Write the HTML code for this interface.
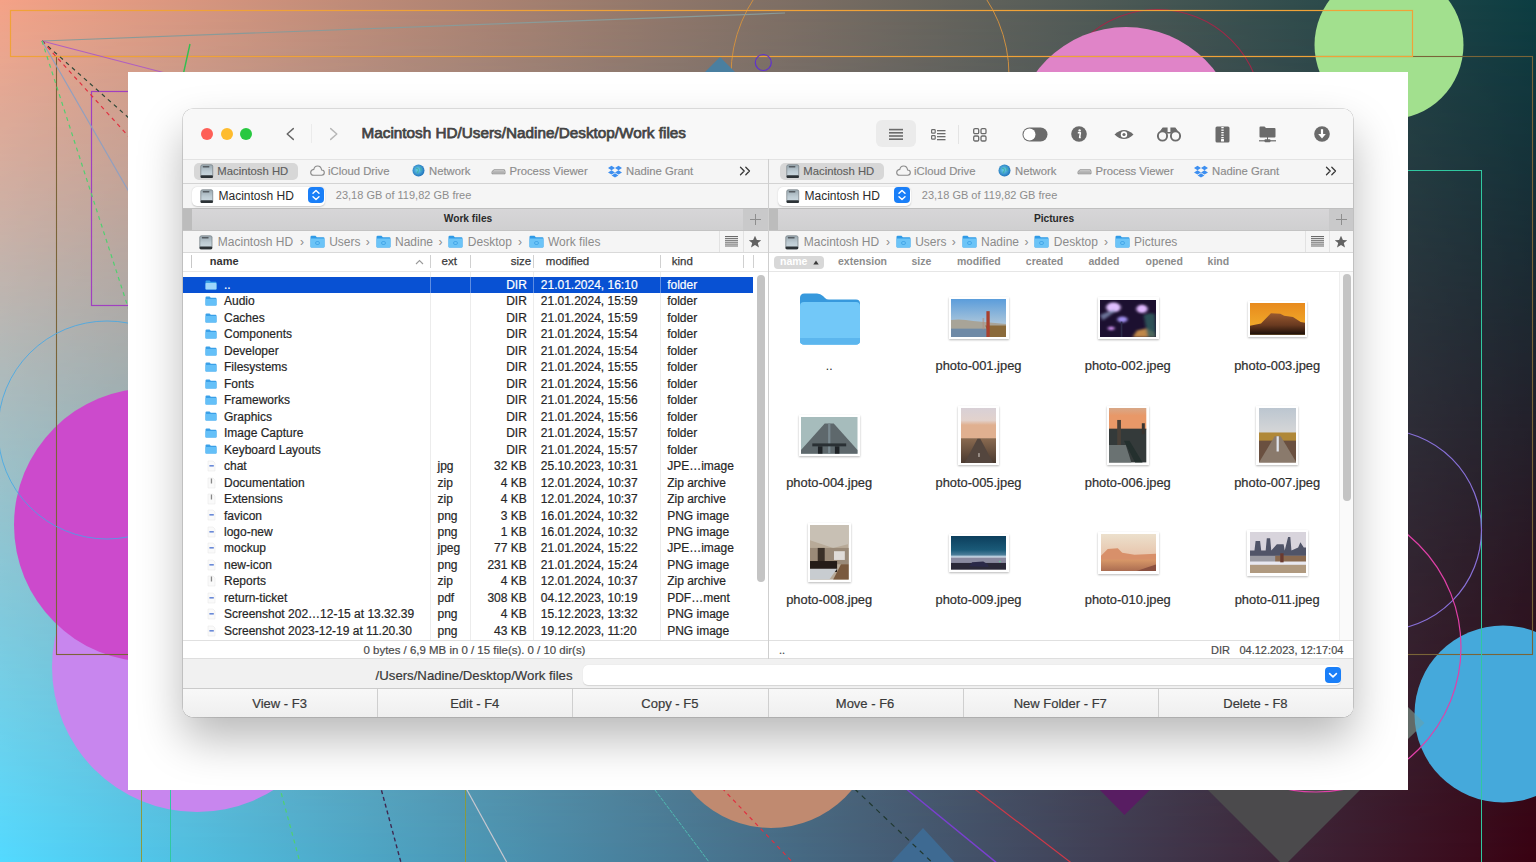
<!DOCTYPE html>
<html><head><meta charset="utf-8"><style>
*{margin:0;padding:0;box-sizing:border-box}
html,body{width:1536px;height:862px;overflow:hidden;position:relative;font-family:"Liberation Sans",sans-serif}
#bgb{position:absolute;left:0;top:0;width:1536px;height:862px;background:linear-gradient(to right,#53daff,#3a0212)}
#bgt{position:absolute;left:0;top:0;width:1536px;height:862px;background:linear-gradient(to right,#f5a287,#0c3d42);-webkit-mask-image:linear-gradient(to bottom,#000,transparent);mask-image:linear-gradient(to bottom,#000,transparent)}
#frame{position:absolute;left:128px;top:72px;width:1280px;height:718px;background:#fff}
.a{position:absolute;white-space:pre}
</style></head><body>
<div id="bgb"></div><div id="bgt"></div>
<svg width="1536" height="862" viewBox="0 0 1536 862" style="position:absolute;left:0;top:0">
<circle cx="1157.5" cy="114" r="104.5" fill="none" stroke="#a02848" stroke-width="1.1"/>
<circle cx="870" cy="75" r="139" fill="none" stroke="#d09040" stroke-width="1"/>
<circle cx="1126" cy="139" r="112" fill="#e084c8"/>
<circle cx="1389" cy="45" r="74.5" fill="#a2e08e"/>
<polygon points="720,57 703,74 737,74" fill="#4a7fa0"/>
<circle cx="197" cy="667" r="145" fill="#c886ee"/>
<circle cx="151" cy="525" r="137" fill="#cc4acc"/>
<circle cx="771" cy="723" r="105" fill="#c08a70"/>
<polygon points="923,828 888,866 958,866" fill="#3e6a92"/>
<polygon points="1095,785 1155,785 1124.5,815" fill="#581d62"/>
<polygon points="1200,782 1368,782 1284,866" fill="#4b4a4c"/>
<polygon points="1380,680 1424.5,723 1380,766" fill="#555052"/>
<circle cx="1503" cy="714" r="88.5" fill="#45a9db"/>
<polygon points="1380,680 1424.5,723 1380,766" fill="#7a9a90" opacity="0.35"/>
<rect x="56.5" y="56.5" width="1476" height="598" fill="none" stroke="#7a6438" stroke-width="1.1"/>
<rect x="10.5" y="10.5" width="1402" height="46" fill="none" stroke="#f0a238" stroke-width="1.2"/>
<rect x="91.5" y="91.5" width="300" height="214" fill="none" stroke="#a040c0" stroke-width="1.2"/>
<rect x="170.5" y="170.5" width="1311" height="800" fill="none" stroke="#30c8a0" stroke-width="1"/>
<line x1="141.5" y1="700" x2="141.5" y2="862" stroke="#8a9a40" stroke-width="1"/>
<line x1="465.5" y1="700" x2="465.5" y2="862" stroke="#8a9a40" stroke-width="1"/>
<line x1="42" y1="41" x2="785" y2="13" stroke="#8a9a98" stroke-width="1.2"/>
<line x1="42" y1="41" x2="200" y2="82" stroke="#b060c0" stroke-width="1.2"/>
<line x1="42" y1="41" x2="200" y2="181" stroke="#304838" stroke-width="1.2" stroke-dasharray="4,4"/>
<line x1="42" y1="41" x2="200" y2="215" stroke="#e03040" stroke-width="1.2" stroke-dasharray="4,4"/>
<line x1="42" y1="41" x2="200" y2="315" stroke="#90a0c0" stroke-width="1.2"/>
<line x1="42" y1="41" x2="200" y2="530" stroke="#50d070" stroke-width="1.2" stroke-dasharray="4,4"/>
<line x1="190" y1="44" x2="182" y2="80" stroke="#30c050" stroke-width="1.4"/>
<circle cx="763.3" cy="62.5" r="8" fill="none" stroke="#6030d0" stroke-width="1.2"/>
<circle cx="107" cy="430" r="109" fill="none" stroke="#40a8e8" stroke-width="1" opacity="0.8"/>
<line x1="700" y1="765" x2="800" y2="870" stroke="#e03040" stroke-width="1.2" stroke-dasharray="4,4"/>
<line x1="275" y1="770" x2="302" y2="870" stroke="#50d070" stroke-width="1.2" stroke-dasharray="4,4"/>
<line x1="376" y1="770" x2="403" y2="870" stroke="#402850" stroke-width="1.4" stroke-dasharray="4,3"/>
<line x1="456" y1="770" x2="511" y2="870" stroke="#c8c8d0" stroke-width="1.2"/>
<line x1="640" y1="770" x2="715" y2="870" stroke="#50b8b0" stroke-width="1" stroke-dasharray="4,1"/>
<line x1="840" y1="775" x2="937" y2="867" stroke="#203830" stroke-width="1.2" stroke-dasharray="5,5"/>
<line x1="888" y1="774" x2="1003" y2="868" stroke="#7a40d0" stroke-width="1.5"/>
<line x1="955" y1="774" x2="1078" y2="868" stroke="#d03848" stroke-width="1.2"/>
<circle cx="1381" cy="530" r="100.5" fill="none" stroke="#8870d8" stroke-width="1.2"/>
<circle cx="1316" cy="647" r="145" fill="none" stroke="#e040a8" stroke-width="1.2"/>
</svg>
<div id="frame"></div>
<div style="position:absolute;left:182.6px;top:108.6px;width:1170.8px;height:608.2px;border-radius:10px;box-shadow:0 22px 45px rgba(0,0,0,0.28),0 0 0 0.6px rgba(0,0,0,0.22);"></div>
<div style="position:absolute;left:182.6px;top:108.6px;width:1170.8px;height:608.2px;border-radius:10px;overflow:hidden;background:#fff;"><div style="position:absolute;left:-0.6px;top:-0.6px;width:1172px;height:609px">
<div class="a" style="left:0.00px;top:0.00px;width:1172.00px;height:51.00px;background:#f8f8f8"></div>
<div class="a" style="left:0.00px;top:51.00px;width:1172.00px;height:1.00px;background:#e3e3e3"></div>
<div class="a" style="left:19.20px;top:19.60px;width:12.00px;height:12.00px;background:#fe5f57;border-radius:50%"></div>
<div class="a" style="left:39.00px;top:19.60px;width:12.00px;height:12.00px;background:#febc2e;border-radius:50%"></div>
<div class="a" style="left:58.30px;top:19.60px;width:12.00px;height:12.00px;background:#28c840;border-radius:50%"></div>
<svg class="a" style="left:102.00px;top:17.00px" width="12" height="17" viewBox="0 0 12 17"><path d="M9.3 3.6 L3.2 9 L9.3 14.4" fill="none" stroke="#686868" stroke-width="1.45" stroke-linecap="round" stroke-linejoin="round"/></svg>
<div class="a" style="left:129.00px;top:16.00px;width:1.00px;height:19.00px;background:#ebebeb"></div>
<svg class="a" style="left:145.00px;top:17.00px" width="12" height="17" viewBox="0 0 12 17"><path d="M3.7 3.6 L9.8 9 L3.7 14.4" fill="none" stroke="#b8b8b8" stroke-width="1.45" stroke-linecap="round" stroke-linejoin="round"/></svg>
<div class="a" style="left:179.50px;top:17.35px;font-size:15.3px;line-height:15.3px;color:#444;font-weight:normal;-webkit-text-stroke:0.75px #444">Macintosh HD/Users/Nadine/Desktop/Work files</div>
<div class="a" style="left:694.00px;top:12.00px;width:40.00px;height:26.60px;background:#ebebeb;border-radius:6px"></div>
<svg class="a" style="left:707.00px;top:20.00px" width="14" height="12" viewBox="0 0 14 12"><rect x="0" y="0.8" width="14" height="1.6" fill="#6b6b6b"/><rect x="0" y="4.0" width="14" height="1.6" fill="#6b6b6b"/><rect x="0" y="7.2" width="14" height="1.6" fill="#6b6b6b"/><rect x="0" y="10.4" width="14" height="1.6" fill="#6b6b6b"/></svg>
<svg class="a" style="left:748.50px;top:20.50px" width="15" height="12" viewBox="0 0 15 12"><rect x="0.6" y="0.6" width="3.6" height="3.6" rx="0.8" fill="none" stroke="#6b6b6b" stroke-width="1.2"/><rect x="0.6" y="6.6" width="3.6" height="3.6" rx="0.8" fill="none" stroke="#6b6b6b" stroke-width="1.2"/><rect x="6" y="1" width="8.5" height="1.3" fill="#6b6b6b"/><rect x="6" y="4" width="8.5" height="1.3" fill="#6b6b6b"/><rect x="6" y="7" width="8.5" height="1.3" fill="#6b6b6b"/><rect x="6" y="10" width="8.5" height="1.3" fill="#6b6b6b"/></svg>
<div class="a" style="left:776.00px;top:16.50px;width:1.00px;height:19.00px;background:#e4e4e4"></div>
<svg class="a" style="left:790.50px;top:19.50px" width="14" height="14" viewBox="0 0 14 14"><rect x="0.7" y="0.7" width="5" height="5" rx="1.3" fill="none" stroke="#6b6b6b" stroke-width="1.3"/><rect x="0.7" y="8.0" width="5" height="5" rx="1.3" fill="none" stroke="#6b6b6b" stroke-width="1.3"/><rect x="8.0" y="0.7" width="5" height="5" rx="1.3" fill="none" stroke="#6b6b6b" stroke-width="1.3"/><rect x="8.0" y="8.0" width="5" height="5" rx="1.3" fill="none" stroke="#6b6b6b" stroke-width="1.3"/></svg>
<svg class="a" style="left:839.50px;top:18.50px" width="26" height="15" viewBox="0 0 26 15"><rect x="0.5" y="0.5" width="25" height="14" rx="7" fill="#6b6b6b"/><circle cx="7.5" cy="7.5" r="6" fill="#fff"/></svg>
<svg class="a" style="left:889.00px;top:18.00px" width="16" height="16" viewBox="0 0 16 16"><circle cx="8" cy="8" r="7.8" fill="#6b6b6b"/><circle cx="8.6" cy="4.4" r="1.2" fill="#fff"/><path d="M6.8 6.8 H9.4 L8.6 11.6 H9.8" fill="none" stroke="#fff" stroke-width="1.5" stroke-linejoin="round"/></svg>
<svg class="a" style="left:932.00px;top:19.50px" width="20" height="13" viewBox="0 0 20 13"><path d="M0.5 6.5 Q10 -2.5 19.5 6.5 Q10 15.5 0.5 6.5 Z" fill="#6b6b6b"/><circle cx="10" cy="6.5" r="3.2" fill="#fff"/><circle cx="10" cy="6.5" r="1.6" fill="#6b6b6b"/></svg>
<svg class="a" style="left:974.50px;top:18.50px" width="24" height="15" viewBox="0 0 24 15"><circle cx="5.5" cy="9" r="4.6" fill="none" stroke="#6b6b6b" stroke-width="1.9"/><circle cx="18.5" cy="9" r="4.6" fill="none" stroke="#6b6b6b" stroke-width="1.9"/><path d="M3 5 L6 1 H10 V6 H14 V1 H18 L21 5" fill="#6b6b6b" stroke="#6b6b6b" stroke-width="1.2"/></svg>
<svg class="a" style="left:1032.50px;top:17.50px" width="15" height="17" viewBox="0 0 15 17"><rect x="0.5" y="0.5" width="14" height="16" rx="1.5" fill="#6b6b6b"/><rect x="6.3" y="1.0" width="2.4" height="1.3" fill="#fff"/><rect x="6.3" y="3.5" width="2.4" height="1.3" fill="#fff"/><rect x="6.3" y="6.0" width="2.4" height="1.3" fill="#fff"/><rect x="6.3" y="8.5" width="2.4" height="1.3" fill="#fff"/><rect x="6.3" y="11.0" width="2.4" height="1.3" fill="#fff"/><rect x="6" y="13" width="3" height="2.5" rx="0.5" fill="#fff"/></svg>
<svg class="a" style="left:1076.50px;top:17.50px" width="17" height="17" viewBox="0 0 17 17"><path d="M0.5 1.5 Q0.5 0.5 1.5 0.5 H5.5 L7 2 H15.5 Q16.5 2 16.5 3 V10.5 Q16.5 11.5 15.5 11.5 H1.5 Q0.5 11.5 0.5 10.5 Z" fill="#6b6b6b"/><rect x="8" y="11" width="1" height="3" fill="#6b6b6b"/><rect x="0" y="14.2" width="17" height="1.2" fill="#6b6b6b"/><rect x="5.5" y="13.2" width="6" height="3" rx="1" fill="#6b6b6b"/></svg>
<svg class="a" style="left:1131.50px;top:18.00px" width="16" height="16" viewBox="0 0 16 16"><circle cx="8" cy="8" r="7.8" fill="#6b6b6b"/><rect x="6.9" y="3.2" width="2.2" height="5.5" fill="#fff"/><path d="M4.2 8 H11.8 L8 12.4 Z" fill="#fff"/></svg>
<div class="a" style="left:0.00px;top:52.00px;width:586.00px;height:23.00px;background:#f5f5f5"></div>
<div class="a" style="left:0.00px;top:75.00px;width:586.00px;height:1.00px;background:#d3d3d3"></div>
<div class="a" style="left:11.50px;top:54.50px;width:104.00px;height:17.00px;background:#d7d7d7;border-radius:5px"></div>
<svg class="a" style="left:18.00px;top:56.00px" width="13.5" height="14.464285714285714" viewBox="0 0 14 15"><defs><linearGradient id="hdg1" x1="0" y1="0" x2="0" y2="1"><stop offset="0" stop-color="#9aa8b0"/><stop offset="0.5" stop-color="#bccad2"/><stop offset="1" stop-color="#d0dde4"/></linearGradient></defs><rect x="0.8" y="0.8" width="12.4" height="13.4" rx="1.6" fill="url(#hdg1)" stroke="#7a848a" stroke-width="0.8"/><rect x="2.8" y="2" width="7" height="1.6" rx="0.5" fill="#555c62"/><rect x="0.6" y="11.6" width="12.8" height="2.8" rx="1" fill="#2c3236"/></svg>
<div class="a" style="left:35.30px;top:57.53px;font-size:11.3px;line-height:11.3px;color:#5e5e5e;font-weight:normal;-webkit-text-stroke:0.15px #5e5e5e">Macintosh HD</div>
<svg class="a" style="left:127.50px;top:57.00px" width="15" height="11" viewBox="0 0 15 11"><path d="M3.6 10.3 H11.6 Q14.3 10.3 14.3 7.6 Q14.3 5 11.6 5 Q11 1 7.6 1 Q4.4 1 3.8 4.4 Q0.7 4.8 0.7 7.5 Q0.7 10.3 3.6 10.3 Z" fill="none" stroke="#8a8a8a" stroke-width="1.1"/></svg>
<div class="a" style="left:146.00px;top:57.53px;font-size:11.3px;line-height:11.3px;color:#8c8c8c;font-weight:normal;-webkit-text-stroke:0.15px #8c8c8c">iCloud Drive</div>
<svg class="a" style="left:229.50px;top:56.00px" width="13" height="13" viewBox="0 0 13 13"><defs><radialGradient id="glb" cx="0.45" cy="0.45" r="0.6"><stop offset="0" stop-color="#6fd4f0"/><stop offset="1" stop-color="#1a6cb8"/></radialGradient></defs><circle cx="6.5" cy="6.5" r="6" fill="url(#glb)"/><path d="M4 4.5 Q6 4 6.5 6 Q6 8 5 9 M8 3 Q9.5 5 9 7" fill="none" stroke="#40b0a0" stroke-width="1.2" opacity="0.8"/></svg>
<div class="a" style="left:247.00px;top:57.53px;font-size:11.3px;line-height:11.3px;color:#8c8c8c;font-weight:normal;-webkit-text-stroke:0.15px #8c8c8c">Network</div>
<svg class="a" style="left:309.00px;top:59.50px" width="15" height="7" viewBox="0 0 15 7"><path d="M1 3.5 L3 1.8 H13.5 L14 3.5 V5.8 H1 Z" fill="#d8d8d8" stroke="#8a8a8a" stroke-width="0.9"/><rect x="2" y="3.6" width="11" height="0.9" fill="#8a8a8a"/></svg>
<div class="a" style="left:327.40px;top:57.53px;font-size:11.3px;line-height:11.3px;color:#8c8c8c;font-weight:normal;-webkit-text-stroke:0.15px #8c8c8c">Process Viewer</div>
<svg class="a" style="left:426.00px;top:56.50px" width="14" height="13" viewBox="0 0 14 13"><path d="M3.5 0.8 L7 3 L3.5 5.2 L0 3 Z M10.5 0.8 L14 3 L10.5 5.2 L7 3 Z M3.5 5.2 L7 7.4 L3.5 9.6 L0 7.4 Z M10.5 5.2 L14 7.4 L10.5 9.6 L7 7.4 Z M3.6 10.4 L7 8.3 L10.4 10.4 L7 12.6 Z" fill="#3d8ff0"/></svg>
<div class="a" style="left:444.00px;top:57.53px;font-size:11.3px;line-height:11.3px;color:#8c8c8c;font-weight:normal;-webkit-text-stroke:0.15px #8c8c8c">Nadine Grant</div>
<svg class="a" style="left:557.00px;top:58.00px" width="12" height="10" viewBox="0 0 12 10"><path d="M1.5 1.2 L5.2 5 L1.5 8.8 M6.8 1.2 L10.5 5 L6.8 8.8" fill="none" stroke="#3a3a3a" stroke-width="1.3" stroke-linecap="round" stroke-linejoin="round"/></svg>
<div class="a" style="left:0.00px;top:76.00px;width:586.00px;height:24.00px;background:#f5f5f5"></div>
<div class="a" style="left:0.00px;top:100.00px;width:586.00px;height:1.00px;background:#bfbfbf"></div>
<div class="a" style="left:10.30px;top:78.80px;width:133.00px;height:19.00px;background:#fff;border-radius:5px;box-shadow:0 0.5px 1.5px rgba(0,0,0,0.18)"></div>
<svg class="a" style="left:18.20px;top:80.80px" width="13.5" height="14.464285714285714" viewBox="0 0 14 15"><defs><linearGradient id="hdg2" x1="0" y1="0" x2="0" y2="1"><stop offset="0" stop-color="#9aa8b0"/><stop offset="0.5" stop-color="#bccad2"/><stop offset="1" stop-color="#d0dde4"/></linearGradient></defs><rect x="0.8" y="0.8" width="12.4" height="13.4" rx="1.6" fill="url(#hdg2)" stroke="#7a848a" stroke-width="0.8"/><rect x="2.8" y="2" width="7" height="1.6" rx="0.5" fill="#555c62"/><rect x="0.6" y="11.6" width="12.8" height="2.8" rx="1" fill="#2c3236"/></svg>
<div class="a" style="left:36.50px;top:81.64px;font-size:12px;line-height:12px;color:#2a2a2a;font-weight:normal;">Macintosh HD</div>
<svg class="a" style="left:126.40px;top:79.30px" width="16" height="16" viewBox="0 0 16 16"><rect x="0" y="0" width="16" height="16" rx="4" fill="#1a7ff8"/><path d="M5 6.2 L8 3.4 L11 6.2 M5 9.8 L8 12.6 L11 9.8" fill="none" stroke="#fff" stroke-width="1.4" stroke-linecap="round" stroke-linejoin="round"/></svg>
<div class="a" style="left:153.80px;top:82.29px;font-size:11px;line-height:11px;color:#8d8d8d;font-weight:normal;">23,18 GB of 119,82 GB free</div>
<div class="a" style="left:0.00px;top:101.00px;width:586.00px;height:21.50px;background:linear-gradient(#d7d6d8,#cfcfd0)"></div>
<div class="a" style="left:0.00px;top:101.00px;width:10.00px;height:21.50px;background:#bcbcbc"></div>
<div class="a" style="left:561.00px;top:101.00px;width:24.50px;height:21.50px;background:#c9c9ca"></div>
<div class="a" style="left:0.00px;top:122.00px;width:586.00px;height:1.00px;background:#c3c3c3"></div>
<svg class="a" style="left:566.50px;top:105.00px" width="13" height="13" viewBox="0 0 13 13"><path d="M6.5 1 V12 M1 6.5 H12" stroke="#8e8e8e" stroke-width="1"/></svg>
<div class="a" style="left:-14.00px;width:600px;text-align:center;top:106.47px;font-size:10.2px;line-height:10.2px;color:#2a2a2a;font-weight:bold;">Work files</div>
<div class="a" style="left:0.00px;top:123.00px;width:586.00px;height:21.50px;background:#f5f5f5"></div>
<div class="a" style="left:0.00px;top:144.00px;width:586.00px;height:1.00px;background:#d9d9d9"></div>
<div class="a" style="left:537.00px;top:123.00px;width:1.00px;height:21.00px;background:#e2e2e2"></div>
<div class="a" style="left:561.00px;top:123.00px;width:1.00px;height:21.00px;background:#e2e2e2"></div>
<svg class="a" style="left:543.00px;top:128.00px" width="13" height="11" viewBox="0 0 13 11"><rect x="0" y="0.0" width="13" height="1.1" fill="#6a6a6a"/><rect x="0" y="2.1" width="13" height="1.1" fill="#6a6a6a"/><rect x="0" y="4.2" width="13" height="1.1" fill="#6a6a6a"/><rect x="0" y="6.3" width="13" height="1.1" fill="#6a6a6a"/><rect x="0" y="8.4" width="13" height="1.1" fill="#6a6a6a"/><rect x="0" y="10.5" width="13" height="1.1" fill="#6a6a6a"/></svg>
<svg class="a" style="left:566.00px;top:126.50px" width="14" height="14" viewBox="0 0 14 14"><path d="M7 0.8 L8.9 5 L13.3 5.2 L9.8 8 L11 12.5 L7 10 L3 12.5 L4.2 8 L0.7 5.2 L5.1 5 Z" fill="#626262"/></svg>
<svg class="a" style="left:16.80px;top:126.80px" width="13.8" height="14.785714285714286" viewBox="0 0 14 15"><defs><linearGradient id="hdg3" x1="0" y1="0" x2="0" y2="1"><stop offset="0" stop-color="#9aa8b0"/><stop offset="0.5" stop-color="#bccad2"/><stop offset="1" stop-color="#d0dde4"/></linearGradient></defs><rect x="0.8" y="0.8" width="12.4" height="13.4" rx="1.6" fill="url(#hdg3)" stroke="#7a848a" stroke-width="0.8"/><rect x="2.8" y="2" width="7" height="1.6" rx="0.5" fill="#555c62"/><rect x="0.6" y="11.6" width="12.8" height="2.8" rx="1" fill="#2c3236"/></svg>
<div class="a" style="left:35.80px;top:128.44px;font-size:12px;line-height:12px;color:#8b8b8b;font-weight:normal;">Macintosh HD</div>
<div class="a" style="left:117.90px;top:128.04px;font-size:12px;line-height:12px;color:#8b8b8b;font-weight:normal;">›</div>
<div class="a" style="left:183.80px;top:128.04px;font-size:12px;line-height:12px;color:#8b8b8b;font-weight:normal;">›</div>
<div class="a" style="left:256.50px;top:128.04px;font-size:12px;line-height:12px;color:#8b8b8b;font-weight:normal;">›</div>
<div class="a" style="left:336.00px;top:128.04px;font-size:12px;line-height:12px;color:#8b8b8b;font-weight:normal;">›</div>
<svg class="a" style="left:128.00px;top:127.00px" width="15" height="13" viewBox="0 0 15 13"><path d="M0.5 2 Q0.5 0.8 1.7 0.8 H5.5 L6.8 2.2 H13.3 Q14.5 2.2 14.5 3.4 V11.6 Q14.5 12.5 13.6 12.5 H1.4 Q0.5 12.5 0.5 11.6 Z" fill="#2f9ae6"/><rect x="0.5" y="3.6" width="14" height="8.9" rx="1" fill="#6cc4f7"/><rect x="5.5" y="6.5" width="4" height="3" rx="1.5" fill="none" stroke="#3da2e6" stroke-width="0.8"/></svg>
<div class="a" style="left:147.20px;top:128.44px;font-size:12px;line-height:12px;color:#8b8b8b;font-weight:normal;">Users</div>
<svg class="a" style="left:194.00px;top:127.00px" width="15" height="13" viewBox="0 0 15 13"><path d="M0.5 2 Q0.5 0.8 1.7 0.8 H5.5 L6.8 2.2 H13.3 Q14.5 2.2 14.5 3.4 V11.6 Q14.5 12.5 13.6 12.5 H1.4 Q0.5 12.5 0.5 11.6 Z" fill="#2f9ae6"/><rect x="0.5" y="3.6" width="14" height="8.9" rx="1" fill="#6cc4f7"/><rect x="5.5" y="6.5" width="4" height="3" rx="1.5" fill="none" stroke="#3da2e6" stroke-width="0.8"/></svg>
<div class="a" style="left:213.00px;top:128.44px;font-size:12px;line-height:12px;color:#8b8b8b;font-weight:normal;">Nadine</div>
<svg class="a" style="left:266.40px;top:127.00px" width="15" height="13" viewBox="0 0 15 13"><path d="M0.5 2 Q0.5 0.8 1.7 0.8 H5.5 L6.8 2.2 H13.3 Q14.5 2.2 14.5 3.4 V11.6 Q14.5 12.5 13.6 12.5 H1.4 Q0.5 12.5 0.5 11.6 Z" fill="#2f9ae6"/><rect x="0.5" y="3.6" width="14" height="8.9" rx="1" fill="#6cc4f7"/><rect x="5.5" y="6.5" width="4" height="3" rx="1.5" fill="none" stroke="#3da2e6" stroke-width="0.8"/></svg>
<div class="a" style="left:285.80px;top:128.44px;font-size:12px;line-height:12px;color:#8b8b8b;font-weight:normal;">Desktop</div>
<svg class="a" style="left:347.00px;top:127.00px" width="15" height="13" viewBox="0 0 15 13"><path d="M0.5 2 Q0.5 0.8 1.7 0.8 H5.5 L6.8 2.2 H13.3 Q14.5 2.2 14.5 3.4 V11.6 Q14.5 12.5 13.6 12.5 H1.4 Q0.5 12.5 0.5 11.6 Z" fill="#2f9ae6"/><rect x="0.5" y="3.6" width="14" height="8.9" rx="1" fill="#6cc4f7"/><rect x="5.5" y="6.5" width="4" height="3" rx="1.5" fill="none" stroke="#3da2e6" stroke-width="0.8"/></svg>
<div class="a" style="left:366.00px;top:128.44px;font-size:12px;line-height:12px;color:#8b8b8b;font-weight:normal;">Work files</div>
<div class="a" style="left:0.00px;top:145.00px;width:586.00px;height:18.00px;background:#fff"></div>
<div class="a" style="left:0.00px;top:163.00px;width:586.00px;height:1.00px;background:#e6e6e6"></div>
<div class="a" style="left:0.00px;top:164.00px;width:586.00px;height:368.00px;background:#fff"></div>
<div class="a" style="left:0.00px;top:532.00px;width:586.00px;height:1.00px;background:#e0e0e0"></div>
<div class="a" style="left:0.00px;top:533.00px;width:586.00px;height:17.00px;background:#fff"></div>
<div class="a" style="left:0.00px;top:550.00px;width:586.00px;height:1.00px;background:#dedede"></div>
<div class="a" style="left:586.00px;top:52.00px;width:586.00px;height:23.00px;background:#f5f5f5"></div>
<div class="a" style="left:586.00px;top:75.00px;width:586.00px;height:1.00px;background:#d3d3d3"></div>
<div class="a" style="left:597.50px;top:54.50px;width:104.00px;height:17.00px;background:#d7d7d7;border-radius:5px"></div>
<svg class="a" style="left:604.00px;top:56.00px" width="13.5" height="14.464285714285714" viewBox="0 0 14 15"><defs><linearGradient id="hdg4" x1="0" y1="0" x2="0" y2="1"><stop offset="0" stop-color="#9aa8b0"/><stop offset="0.5" stop-color="#bccad2"/><stop offset="1" stop-color="#d0dde4"/></linearGradient></defs><rect x="0.8" y="0.8" width="12.4" height="13.4" rx="1.6" fill="url(#hdg4)" stroke="#7a848a" stroke-width="0.8"/><rect x="2.8" y="2" width="7" height="1.6" rx="0.5" fill="#555c62"/><rect x="0.6" y="11.6" width="12.8" height="2.8" rx="1" fill="#2c3236"/></svg>
<div class="a" style="left:621.30px;top:57.53px;font-size:11.3px;line-height:11.3px;color:#5e5e5e;font-weight:normal;-webkit-text-stroke:0.15px #5e5e5e">Macintosh HD</div>
<svg class="a" style="left:713.50px;top:57.00px" width="15" height="11" viewBox="0 0 15 11"><path d="M3.6 10.3 H11.6 Q14.3 10.3 14.3 7.6 Q14.3 5 11.6 5 Q11 1 7.6 1 Q4.4 1 3.8 4.4 Q0.7 4.8 0.7 7.5 Q0.7 10.3 3.6 10.3 Z" fill="none" stroke="#8a8a8a" stroke-width="1.1"/></svg>
<div class="a" style="left:732.00px;top:57.53px;font-size:11.3px;line-height:11.3px;color:#8c8c8c;font-weight:normal;-webkit-text-stroke:0.15px #8c8c8c">iCloud Drive</div>
<svg class="a" style="left:815.50px;top:56.00px" width="13" height="13" viewBox="0 0 13 13"><defs><radialGradient id="glb" cx="0.45" cy="0.45" r="0.6"><stop offset="0" stop-color="#6fd4f0"/><stop offset="1" stop-color="#1a6cb8"/></radialGradient></defs><circle cx="6.5" cy="6.5" r="6" fill="url(#glb)"/><path d="M4 4.5 Q6 4 6.5 6 Q6 8 5 9 M8 3 Q9.5 5 9 7" fill="none" stroke="#40b0a0" stroke-width="1.2" opacity="0.8"/></svg>
<div class="a" style="left:833.00px;top:57.53px;font-size:11.3px;line-height:11.3px;color:#8c8c8c;font-weight:normal;-webkit-text-stroke:0.15px #8c8c8c">Network</div>
<svg class="a" style="left:895.00px;top:59.50px" width="15" height="7" viewBox="0 0 15 7"><path d="M1 3.5 L3 1.8 H13.5 L14 3.5 V5.8 H1 Z" fill="#d8d8d8" stroke="#8a8a8a" stroke-width="0.9"/><rect x="2" y="3.6" width="11" height="0.9" fill="#8a8a8a"/></svg>
<div class="a" style="left:913.40px;top:57.53px;font-size:11.3px;line-height:11.3px;color:#8c8c8c;font-weight:normal;-webkit-text-stroke:0.15px #8c8c8c">Process Viewer</div>
<svg class="a" style="left:1012.00px;top:56.50px" width="14" height="13" viewBox="0 0 14 13"><path d="M3.5 0.8 L7 3 L3.5 5.2 L0 3 Z M10.5 0.8 L14 3 L10.5 5.2 L7 3 Z M3.5 5.2 L7 7.4 L3.5 9.6 L0 7.4 Z M10.5 5.2 L14 7.4 L10.5 9.6 L7 7.4 Z M3.6 10.4 L7 8.3 L10.4 10.4 L7 12.6 Z" fill="#3d8ff0"/></svg>
<div class="a" style="left:1030.00px;top:57.53px;font-size:11.3px;line-height:11.3px;color:#8c8c8c;font-weight:normal;-webkit-text-stroke:0.15px #8c8c8c">Nadine Grant</div>
<svg class="a" style="left:1143.00px;top:58.00px" width="12" height="10" viewBox="0 0 12 10"><path d="M1.5 1.2 L5.2 5 L1.5 8.8 M6.8 1.2 L10.5 5 L6.8 8.8" fill="none" stroke="#3a3a3a" stroke-width="1.3" stroke-linecap="round" stroke-linejoin="round"/></svg>
<div class="a" style="left:586.00px;top:76.00px;width:586.00px;height:24.00px;background:#f5f5f5"></div>
<div class="a" style="left:586.00px;top:100.00px;width:586.00px;height:1.00px;background:#bfbfbf"></div>
<div class="a" style="left:596.30px;top:78.80px;width:133.00px;height:19.00px;background:#fff;border-radius:5px;box-shadow:0 0.5px 1.5px rgba(0,0,0,0.18)"></div>
<svg class="a" style="left:604.20px;top:80.80px" width="13.5" height="14.464285714285714" viewBox="0 0 14 15"><defs><linearGradient id="hdg5" x1="0" y1="0" x2="0" y2="1"><stop offset="0" stop-color="#9aa8b0"/><stop offset="0.5" stop-color="#bccad2"/><stop offset="1" stop-color="#d0dde4"/></linearGradient></defs><rect x="0.8" y="0.8" width="12.4" height="13.4" rx="1.6" fill="url(#hdg5)" stroke="#7a848a" stroke-width="0.8"/><rect x="2.8" y="2" width="7" height="1.6" rx="0.5" fill="#555c62"/><rect x="0.6" y="11.6" width="12.8" height="2.8" rx="1" fill="#2c3236"/></svg>
<div class="a" style="left:622.50px;top:81.64px;font-size:12px;line-height:12px;color:#2a2a2a;font-weight:normal;">Macintosh HD</div>
<svg class="a" style="left:712.40px;top:79.30px" width="16" height="16" viewBox="0 0 16 16"><rect x="0" y="0" width="16" height="16" rx="4" fill="#1a7ff8"/><path d="M5 6.2 L8 3.4 L11 6.2 M5 9.8 L8 12.6 L11 9.8" fill="none" stroke="#fff" stroke-width="1.4" stroke-linecap="round" stroke-linejoin="round"/></svg>
<div class="a" style="left:739.80px;top:82.29px;font-size:11px;line-height:11px;color:#8d8d8d;font-weight:normal;">23,18 GB of 119,82 GB free</div>
<div class="a" style="left:586.00px;top:101.00px;width:586.00px;height:21.50px;background:linear-gradient(#d7d6d8,#cfcfd0)"></div>
<div class="a" style="left:586.00px;top:101.00px;width:10.00px;height:21.50px;background:#bcbcbc"></div>
<div class="a" style="left:1147.00px;top:101.00px;width:24.50px;height:21.50px;background:#c9c9ca"></div>
<div class="a" style="left:586.00px;top:122.00px;width:586.00px;height:1.00px;background:#c3c3c3"></div>
<svg class="a" style="left:1152.50px;top:105.00px" width="13" height="13" viewBox="0 0 13 13"><path d="M6.5 1 V12 M1 6.5 H12" stroke="#8e8e8e" stroke-width="1"/></svg>
<div class="a" style="left:572.00px;width:600px;text-align:center;top:106.47px;font-size:10.2px;line-height:10.2px;color:#2a2a2a;font-weight:bold;">Pictures</div>
<div class="a" style="left:586.00px;top:123.00px;width:586.00px;height:21.50px;background:#f5f5f5"></div>
<div class="a" style="left:586.00px;top:144.00px;width:586.00px;height:1.00px;background:#d9d9d9"></div>
<div class="a" style="left:1123.00px;top:123.00px;width:1.00px;height:21.00px;background:#e2e2e2"></div>
<div class="a" style="left:1147.00px;top:123.00px;width:1.00px;height:21.00px;background:#e2e2e2"></div>
<svg class="a" style="left:1129.00px;top:128.00px" width="13" height="11" viewBox="0 0 13 11"><rect x="0" y="0.0" width="13" height="1.1" fill="#6a6a6a"/><rect x="0" y="2.1" width="13" height="1.1" fill="#6a6a6a"/><rect x="0" y="4.2" width="13" height="1.1" fill="#6a6a6a"/><rect x="0" y="6.3" width="13" height="1.1" fill="#6a6a6a"/><rect x="0" y="8.4" width="13" height="1.1" fill="#6a6a6a"/><rect x="0" y="10.5" width="13" height="1.1" fill="#6a6a6a"/></svg>
<svg class="a" style="left:1152.00px;top:126.50px" width="14" height="14" viewBox="0 0 14 14"><path d="M7 0.8 L8.9 5 L13.3 5.2 L9.8 8 L11 12.5 L7 10 L3 12.5 L4.2 8 L0.7 5.2 L5.1 5 Z" fill="#626262"/></svg>
<svg class="a" style="left:602.80px;top:126.80px" width="13.8" height="14.785714285714286" viewBox="0 0 14 15"><defs><linearGradient id="hdg6" x1="0" y1="0" x2="0" y2="1"><stop offset="0" stop-color="#9aa8b0"/><stop offset="0.5" stop-color="#bccad2"/><stop offset="1" stop-color="#d0dde4"/></linearGradient></defs><rect x="0.8" y="0.8" width="12.4" height="13.4" rx="1.6" fill="url(#hdg6)" stroke="#7a848a" stroke-width="0.8"/><rect x="2.8" y="2" width="7" height="1.6" rx="0.5" fill="#555c62"/><rect x="0.6" y="11.6" width="12.8" height="2.8" rx="1" fill="#2c3236"/></svg>
<div class="a" style="left:621.80px;top:128.44px;font-size:12px;line-height:12px;color:#8b8b8b;font-weight:normal;">Macintosh HD</div>
<div class="a" style="left:703.90px;top:128.04px;font-size:12px;line-height:12px;color:#8b8b8b;font-weight:normal;">›</div>
<div class="a" style="left:769.80px;top:128.04px;font-size:12px;line-height:12px;color:#8b8b8b;font-weight:normal;">›</div>
<div class="a" style="left:842.50px;top:128.04px;font-size:12px;line-height:12px;color:#8b8b8b;font-weight:normal;">›</div>
<div class="a" style="left:922.00px;top:128.04px;font-size:12px;line-height:12px;color:#8b8b8b;font-weight:normal;">›</div>
<svg class="a" style="left:714.00px;top:127.00px" width="15" height="13" viewBox="0 0 15 13"><path d="M0.5 2 Q0.5 0.8 1.7 0.8 H5.5 L6.8 2.2 H13.3 Q14.5 2.2 14.5 3.4 V11.6 Q14.5 12.5 13.6 12.5 H1.4 Q0.5 12.5 0.5 11.6 Z" fill="#2f9ae6"/><rect x="0.5" y="3.6" width="14" height="8.9" rx="1" fill="#6cc4f7"/><rect x="5.5" y="6.5" width="4" height="3" rx="1.5" fill="none" stroke="#3da2e6" stroke-width="0.8"/></svg>
<div class="a" style="left:733.20px;top:128.44px;font-size:12px;line-height:12px;color:#8b8b8b;font-weight:normal;">Users</div>
<svg class="a" style="left:780.00px;top:127.00px" width="15" height="13" viewBox="0 0 15 13"><path d="M0.5 2 Q0.5 0.8 1.7 0.8 H5.5 L6.8 2.2 H13.3 Q14.5 2.2 14.5 3.4 V11.6 Q14.5 12.5 13.6 12.5 H1.4 Q0.5 12.5 0.5 11.6 Z" fill="#2f9ae6"/><rect x="0.5" y="3.6" width="14" height="8.9" rx="1" fill="#6cc4f7"/><rect x="5.5" y="6.5" width="4" height="3" rx="1.5" fill="none" stroke="#3da2e6" stroke-width="0.8"/></svg>
<div class="a" style="left:799.00px;top:128.44px;font-size:12px;line-height:12px;color:#8b8b8b;font-weight:normal;">Nadine</div>
<svg class="a" style="left:852.40px;top:127.00px" width="15" height="13" viewBox="0 0 15 13"><path d="M0.5 2 Q0.5 0.8 1.7 0.8 H5.5 L6.8 2.2 H13.3 Q14.5 2.2 14.5 3.4 V11.6 Q14.5 12.5 13.6 12.5 H1.4 Q0.5 12.5 0.5 11.6 Z" fill="#2f9ae6"/><rect x="0.5" y="3.6" width="14" height="8.9" rx="1" fill="#6cc4f7"/><rect x="5.5" y="6.5" width="4" height="3" rx="1.5" fill="none" stroke="#3da2e6" stroke-width="0.8"/></svg>
<div class="a" style="left:871.80px;top:128.44px;font-size:12px;line-height:12px;color:#8b8b8b;font-weight:normal;">Desktop</div>
<svg class="a" style="left:933.00px;top:127.00px" width="15" height="13" viewBox="0 0 15 13"><path d="M0.5 2 Q0.5 0.8 1.7 0.8 H5.5 L6.8 2.2 H13.3 Q14.5 2.2 14.5 3.4 V11.6 Q14.5 12.5 13.6 12.5 H1.4 Q0.5 12.5 0.5 11.6 Z" fill="#2f9ae6"/><rect x="0.5" y="3.6" width="14" height="8.9" rx="1" fill="#6cc4f7"/><rect x="5.5" y="6.5" width="4" height="3" rx="1.5" fill="none" stroke="#3da2e6" stroke-width="0.8"/></svg>
<div class="a" style="left:952.00px;top:128.44px;font-size:12px;line-height:12px;color:#8b8b8b;font-weight:normal;">Pictures</div>
<div class="a" style="left:586.00px;top:145.00px;width:586.00px;height:18.00px;background:#fff"></div>
<div class="a" style="left:586.00px;top:163.00px;width:586.00px;height:1.00px;background:#e6e6e6"></div>
<div class="a" style="left:586.00px;top:164.00px;width:586.00px;height:368.00px;background:#fff"></div>
<div class="a" style="left:586.00px;top:532.00px;width:586.00px;height:1.00px;background:#e0e0e0"></div>
<div class="a" style="left:586.00px;top:533.00px;width:586.00px;height:17.00px;background:#fff"></div>
<div class="a" style="left:586.00px;top:550.00px;width:586.00px;height:1.00px;background:#dedede"></div>
<div class="a" style="left:586.00px;top:51.00px;width:1.00px;height:500.00px;background:#cfcfcf"></div>
<div class="a" style="left:9.00px;top:147.00px;width:1.00px;height:13.00px;background:#c8c8c8"></div>
<div class="a" style="left:27.80px;top:148.49px;font-size:11px;line-height:11px;color:#333;font-weight:bold;">name</div>
<svg class="a" style="left:232.50px;top:150.50px" width="9" height="6" viewBox="0 0 9 6"><path d="M1 5 L4.5 1.5 L8 5" fill="none" stroke="#9a9a9a" stroke-width="1.1"/></svg>
<div class="a" style="left:247.60px;top:147.00px;width:1.00px;height:13.00px;background:#d0d0d0"></div>
<div class="a" style="left:287.70px;top:147.00px;width:1.00px;height:13.00px;background:#d0d0d0"></div>
<div class="a" style="left:351.20px;top:147.00px;width:1.00px;height:13.00px;background:#d0d0d0"></div>
<div class="a" style="left:477.70px;top:147.00px;width:1.00px;height:13.00px;background:#d0d0d0"></div>
<div class="a" style="left:561.10px;top:147.00px;width:1.00px;height:13.00px;background:#d0d0d0"></div>
<div class="a" style="left:570.60px;top:147.00px;width:1.00px;height:13.00px;background:#d0d0d0"></div>
<div class="a" style="left:259.60px;top:148.27px;font-size:11.5px;line-height:11.5px;color:#3a3a3a;font-weight:normal;-webkit-text-stroke:0.25px #3a3a3a">ext</div>
<div class="a" style="left:-50.80px;width:400px;text-align:right;top:148.27px;font-size:11.5px;line-height:11.5px;color:#3a3a3a;font-weight:normal;-webkit-text-stroke:0.25px #3a3a3a">size</div>
<div class="a" style="left:363.80px;top:148.27px;font-size:11.5px;line-height:11.5px;color:#3a3a3a;font-weight:normal;-webkit-text-stroke:0.25px #3a3a3a">modified</div>
<div class="a" style="left:489.80px;top:148.27px;font-size:11.5px;line-height:11.5px;color:#3a3a3a;font-weight:normal;-webkit-text-stroke:0.25px #3a3a3a">kind</div>
<div class="a" style="left:247.60px;top:164.00px;width:1.00px;height:368.00px;background:#ececec"></div>
<div class="a" style="left:287.70px;top:164.00px;width:1.00px;height:368.00px;background:#ececec"></div>
<div class="a" style="left:351.20px;top:164.00px;width:1.00px;height:368.00px;background:#ececec"></div>
<div class="a" style="left:477.70px;top:164.00px;width:1.00px;height:368.00px;background:#ececec"></div>
<div class="a" style="left:0.00px;top:168.70px;width:571.00px;height:16.30px;background:#0851d3"></div>
<div class="a" style="left:247.60px;top:168.70px;width:1.00px;height:16.30px;background:rgba(255,255,255,0.35)"></div>
<div class="a" style="left:287.70px;top:168.70px;width:1.00px;height:16.30px;background:rgba(255,255,255,0.35)"></div>
<div class="a" style="left:351.20px;top:168.70px;width:1.00px;height:16.30px;background:rgba(255,255,255,0.35)"></div>
<div class="a" style="left:477.70px;top:168.70px;width:1.00px;height:16.30px;background:rgba(255,255,255,0.35)"></div>
<svg class="a" style="left:23.00px;top:171.70px" width="12" height="10" viewBox="0 0 12 10"><path d="M0.5 1.6 Q0.5 0.5 1.6 0.5 H4.6 L5.8 1.8 H10.6 Q11.5 1.8 11.5 2.8 V9 Q11.5 9.6 10.8 9.6 H1.2 Q0.5 9.6 0.5 9 Z" fill="#3aa0e8"/><rect x="0.5" y="3" width="11" height="6.6" rx="0.8" fill="#9ed6fb"/></svg>
<div class="a" style="left:42.00px;top:170.94px;font-size:12px;line-height:12px;color:#fff;font-weight:normal;-webkit-text-stroke:0.2px #fff">..</div>
<div class="a" style="left:-55.20px;width:400px;text-align:right;top:170.94px;font-size:12px;line-height:12px;color:#fff;font-weight:normal;-webkit-text-stroke:0.2px #fff">DIR</div>
<div class="a" style="left:358.80px;top:170.94px;font-size:12px;line-height:12px;color:#fff;font-weight:normal;-webkit-text-stroke:0.2px #fff">21.01.2024, 16:10</div>
<div class="a" style="left:485.20px;top:170.94px;font-size:12px;line-height:12px;color:#fff;font-weight:normal;-webkit-text-stroke:0.2px #fff">folder</div>
<svg class="a" style="left:23.00px;top:188.17px" width="12" height="10" viewBox="0 0 12 10"><path d="M0.5 1.6 Q0.5 0.5 1.6 0.5 H4.6 L5.8 1.8 H10.6 Q11.5 1.8 11.5 2.8 V9 Q11.5 9.6 10.8 9.6 H1.2 Q0.5 9.6 0.5 9 Z" fill="#3aa0e8"/><rect x="0.5" y="3" width="11" height="6.6" rx="0.8" fill="#64c0f8"/></svg>
<div class="a" style="left:42.00px;top:187.41px;font-size:12px;line-height:12px;color:#262626;font-weight:normal;-webkit-text-stroke:0.2px #262626">Audio</div>
<div class="a" style="left:-55.20px;width:400px;text-align:right;top:187.41px;font-size:12px;line-height:12px;color:#262626;font-weight:normal;-webkit-text-stroke:0.2px #262626">DIR</div>
<div class="a" style="left:358.80px;top:187.41px;font-size:12px;line-height:12px;color:#262626;font-weight:normal;-webkit-text-stroke:0.2px #262626">21.01.2024, 15:59</div>
<div class="a" style="left:485.20px;top:187.41px;font-size:12px;line-height:12px;color:#262626;font-weight:normal;-webkit-text-stroke:0.2px #262626">folder</div>
<svg class="a" style="left:23.00px;top:204.64px" width="12" height="10" viewBox="0 0 12 10"><path d="M0.5 1.6 Q0.5 0.5 1.6 0.5 H4.6 L5.8 1.8 H10.6 Q11.5 1.8 11.5 2.8 V9 Q11.5 9.6 10.8 9.6 H1.2 Q0.5 9.6 0.5 9 Z" fill="#3aa0e8"/><rect x="0.5" y="3" width="11" height="6.6" rx="0.8" fill="#64c0f8"/></svg>
<div class="a" style="left:42.00px;top:203.88px;font-size:12px;line-height:12px;color:#262626;font-weight:normal;-webkit-text-stroke:0.2px #262626">Caches</div>
<div class="a" style="left:-55.20px;width:400px;text-align:right;top:203.88px;font-size:12px;line-height:12px;color:#262626;font-weight:normal;-webkit-text-stroke:0.2px #262626">DIR</div>
<div class="a" style="left:358.80px;top:203.88px;font-size:12px;line-height:12px;color:#262626;font-weight:normal;-webkit-text-stroke:0.2px #262626">21.01.2024, 15:59</div>
<div class="a" style="left:485.20px;top:203.88px;font-size:12px;line-height:12px;color:#262626;font-weight:normal;-webkit-text-stroke:0.2px #262626">folder</div>
<svg class="a" style="left:23.00px;top:221.11px" width="12" height="10" viewBox="0 0 12 10"><path d="M0.5 1.6 Q0.5 0.5 1.6 0.5 H4.6 L5.8 1.8 H10.6 Q11.5 1.8 11.5 2.8 V9 Q11.5 9.6 10.8 9.6 H1.2 Q0.5 9.6 0.5 9 Z" fill="#3aa0e8"/><rect x="0.5" y="3" width="11" height="6.6" rx="0.8" fill="#64c0f8"/></svg>
<div class="a" style="left:42.00px;top:220.35px;font-size:12px;line-height:12px;color:#262626;font-weight:normal;-webkit-text-stroke:0.2px #262626">Components</div>
<div class="a" style="left:-55.20px;width:400px;text-align:right;top:220.35px;font-size:12px;line-height:12px;color:#262626;font-weight:normal;-webkit-text-stroke:0.2px #262626">DIR</div>
<div class="a" style="left:358.80px;top:220.35px;font-size:12px;line-height:12px;color:#262626;font-weight:normal;-webkit-text-stroke:0.2px #262626">21.01.2024, 15:54</div>
<div class="a" style="left:485.20px;top:220.35px;font-size:12px;line-height:12px;color:#262626;font-weight:normal;-webkit-text-stroke:0.2px #262626">folder</div>
<svg class="a" style="left:23.00px;top:237.58px" width="12" height="10" viewBox="0 0 12 10"><path d="M0.5 1.6 Q0.5 0.5 1.6 0.5 H4.6 L5.8 1.8 H10.6 Q11.5 1.8 11.5 2.8 V9 Q11.5 9.6 10.8 9.6 H1.2 Q0.5 9.6 0.5 9 Z" fill="#3aa0e8"/><rect x="0.5" y="3" width="11" height="6.6" rx="0.8" fill="#64c0f8"/></svg>
<div class="a" style="left:42.00px;top:236.82px;font-size:12px;line-height:12px;color:#262626;font-weight:normal;-webkit-text-stroke:0.2px #262626">Developer</div>
<div class="a" style="left:-55.20px;width:400px;text-align:right;top:236.82px;font-size:12px;line-height:12px;color:#262626;font-weight:normal;-webkit-text-stroke:0.2px #262626">DIR</div>
<div class="a" style="left:358.80px;top:236.82px;font-size:12px;line-height:12px;color:#262626;font-weight:normal;-webkit-text-stroke:0.2px #262626">21.01.2024, 15:54</div>
<div class="a" style="left:485.20px;top:236.82px;font-size:12px;line-height:12px;color:#262626;font-weight:normal;-webkit-text-stroke:0.2px #262626">folder</div>
<svg class="a" style="left:23.00px;top:254.05px" width="12" height="10" viewBox="0 0 12 10"><path d="M0.5 1.6 Q0.5 0.5 1.6 0.5 H4.6 L5.8 1.8 H10.6 Q11.5 1.8 11.5 2.8 V9 Q11.5 9.6 10.8 9.6 H1.2 Q0.5 9.6 0.5 9 Z" fill="#3aa0e8"/><rect x="0.5" y="3" width="11" height="6.6" rx="0.8" fill="#64c0f8"/></svg>
<div class="a" style="left:42.00px;top:253.29px;font-size:12px;line-height:12px;color:#262626;font-weight:normal;-webkit-text-stroke:0.2px #262626">Filesystems</div>
<div class="a" style="left:-55.20px;width:400px;text-align:right;top:253.29px;font-size:12px;line-height:12px;color:#262626;font-weight:normal;-webkit-text-stroke:0.2px #262626">DIR</div>
<div class="a" style="left:358.80px;top:253.29px;font-size:12px;line-height:12px;color:#262626;font-weight:normal;-webkit-text-stroke:0.2px #262626">21.01.2024, 15:55</div>
<div class="a" style="left:485.20px;top:253.29px;font-size:12px;line-height:12px;color:#262626;font-weight:normal;-webkit-text-stroke:0.2px #262626">folder</div>
<svg class="a" style="left:23.00px;top:270.52px" width="12" height="10" viewBox="0 0 12 10"><path d="M0.5 1.6 Q0.5 0.5 1.6 0.5 H4.6 L5.8 1.8 H10.6 Q11.5 1.8 11.5 2.8 V9 Q11.5 9.6 10.8 9.6 H1.2 Q0.5 9.6 0.5 9 Z" fill="#3aa0e8"/><rect x="0.5" y="3" width="11" height="6.6" rx="0.8" fill="#64c0f8"/></svg>
<div class="a" style="left:42.00px;top:269.76px;font-size:12px;line-height:12px;color:#262626;font-weight:normal;-webkit-text-stroke:0.2px #262626">Fonts</div>
<div class="a" style="left:-55.20px;width:400px;text-align:right;top:269.76px;font-size:12px;line-height:12px;color:#262626;font-weight:normal;-webkit-text-stroke:0.2px #262626">DIR</div>
<div class="a" style="left:358.80px;top:269.76px;font-size:12px;line-height:12px;color:#262626;font-weight:normal;-webkit-text-stroke:0.2px #262626">21.01.2024, 15:56</div>
<div class="a" style="left:485.20px;top:269.76px;font-size:12px;line-height:12px;color:#262626;font-weight:normal;-webkit-text-stroke:0.2px #262626">folder</div>
<svg class="a" style="left:23.00px;top:286.99px" width="12" height="10" viewBox="0 0 12 10"><path d="M0.5 1.6 Q0.5 0.5 1.6 0.5 H4.6 L5.8 1.8 H10.6 Q11.5 1.8 11.5 2.8 V9 Q11.5 9.6 10.8 9.6 H1.2 Q0.5 9.6 0.5 9 Z" fill="#3aa0e8"/><rect x="0.5" y="3" width="11" height="6.6" rx="0.8" fill="#64c0f8"/></svg>
<div class="a" style="left:42.00px;top:286.23px;font-size:12px;line-height:12px;color:#262626;font-weight:normal;-webkit-text-stroke:0.2px #262626">Frameworks</div>
<div class="a" style="left:-55.20px;width:400px;text-align:right;top:286.23px;font-size:12px;line-height:12px;color:#262626;font-weight:normal;-webkit-text-stroke:0.2px #262626">DIR</div>
<div class="a" style="left:358.80px;top:286.23px;font-size:12px;line-height:12px;color:#262626;font-weight:normal;-webkit-text-stroke:0.2px #262626">21.01.2024, 15:56</div>
<div class="a" style="left:485.20px;top:286.23px;font-size:12px;line-height:12px;color:#262626;font-weight:normal;-webkit-text-stroke:0.2px #262626">folder</div>
<svg class="a" style="left:23.00px;top:303.46px" width="12" height="10" viewBox="0 0 12 10"><path d="M0.5 1.6 Q0.5 0.5 1.6 0.5 H4.6 L5.8 1.8 H10.6 Q11.5 1.8 11.5 2.8 V9 Q11.5 9.6 10.8 9.6 H1.2 Q0.5 9.6 0.5 9 Z" fill="#3aa0e8"/><rect x="0.5" y="3" width="11" height="6.6" rx="0.8" fill="#64c0f8"/></svg>
<div class="a" style="left:42.00px;top:302.70px;font-size:12px;line-height:12px;color:#262626;font-weight:normal;-webkit-text-stroke:0.2px #262626">Graphics</div>
<div class="a" style="left:-55.20px;width:400px;text-align:right;top:302.70px;font-size:12px;line-height:12px;color:#262626;font-weight:normal;-webkit-text-stroke:0.2px #262626">DIR</div>
<div class="a" style="left:358.80px;top:302.70px;font-size:12px;line-height:12px;color:#262626;font-weight:normal;-webkit-text-stroke:0.2px #262626">21.01.2024, 15:56</div>
<div class="a" style="left:485.20px;top:302.70px;font-size:12px;line-height:12px;color:#262626;font-weight:normal;-webkit-text-stroke:0.2px #262626">folder</div>
<svg class="a" style="left:23.00px;top:319.93px" width="12" height="10" viewBox="0 0 12 10"><path d="M0.5 1.6 Q0.5 0.5 1.6 0.5 H4.6 L5.8 1.8 H10.6 Q11.5 1.8 11.5 2.8 V9 Q11.5 9.6 10.8 9.6 H1.2 Q0.5 9.6 0.5 9 Z" fill="#3aa0e8"/><rect x="0.5" y="3" width="11" height="6.6" rx="0.8" fill="#64c0f8"/></svg>
<div class="a" style="left:42.00px;top:319.17px;font-size:12px;line-height:12px;color:#262626;font-weight:normal;-webkit-text-stroke:0.2px #262626">Image Capture</div>
<div class="a" style="left:-55.20px;width:400px;text-align:right;top:319.17px;font-size:12px;line-height:12px;color:#262626;font-weight:normal;-webkit-text-stroke:0.2px #262626">DIR</div>
<div class="a" style="left:358.80px;top:319.17px;font-size:12px;line-height:12px;color:#262626;font-weight:normal;-webkit-text-stroke:0.2px #262626">21.01.2024, 15:57</div>
<div class="a" style="left:485.20px;top:319.17px;font-size:12px;line-height:12px;color:#262626;font-weight:normal;-webkit-text-stroke:0.2px #262626">folder</div>
<svg class="a" style="left:23.00px;top:336.40px" width="12" height="10" viewBox="0 0 12 10"><path d="M0.5 1.6 Q0.5 0.5 1.6 0.5 H4.6 L5.8 1.8 H10.6 Q11.5 1.8 11.5 2.8 V9 Q11.5 9.6 10.8 9.6 H1.2 Q0.5 9.6 0.5 9 Z" fill="#3aa0e8"/><rect x="0.5" y="3" width="11" height="6.6" rx="0.8" fill="#64c0f8"/></svg>
<div class="a" style="left:42.00px;top:335.64px;font-size:12px;line-height:12px;color:#262626;font-weight:normal;-webkit-text-stroke:0.2px #262626">Keyboard Layouts</div>
<div class="a" style="left:-55.20px;width:400px;text-align:right;top:335.64px;font-size:12px;line-height:12px;color:#262626;font-weight:normal;-webkit-text-stroke:0.2px #262626">DIR</div>
<div class="a" style="left:358.80px;top:335.64px;font-size:12px;line-height:12px;color:#262626;font-weight:normal;-webkit-text-stroke:0.2px #262626">21.01.2024, 15:57</div>
<div class="a" style="left:485.20px;top:335.64px;font-size:12px;line-height:12px;color:#262626;font-weight:normal;-webkit-text-stroke:0.2px #262626">folder</div>
<svg class="a" style="left:24.50px;top:352.07px" width="9" height="12" viewBox="0 0 9 12"><path d="M1 1 H6 L8 3 V11 H1 Z" fill="#fafafa" stroke="#e6e6e6" stroke-width="0.5"/><rect x="2.4" y="5" width="4.4" height="1.6" fill="#6a8ad8"/></svg>
<div class="a" style="left:42.00px;top:352.11px;font-size:12px;line-height:12px;color:#262626;font-weight:normal;-webkit-text-stroke:0.2px #262626">chat</div>
<div class="a" style="left:255.50px;top:352.11px;font-size:12px;line-height:12px;color:#262626;font-weight:normal;-webkit-text-stroke:0.2px #262626">jpg</div>
<div class="a" style="left:-55.20px;width:400px;text-align:right;top:352.11px;font-size:12px;line-height:12px;color:#262626;font-weight:normal;-webkit-text-stroke:0.2px #262626">32 KB</div>
<div class="a" style="left:358.80px;top:352.11px;font-size:12px;line-height:12px;color:#262626;font-weight:normal;-webkit-text-stroke:0.2px #262626">25.10.2023, 10:31</div>
<div class="a" style="left:485.20px;top:352.11px;font-size:12px;line-height:12px;color:#262626;font-weight:normal;-webkit-text-stroke:0.2px #262626">JPE…image</div>
<svg class="a" style="left:24.50px;top:368.54px" width="9" height="12" viewBox="0 0 9 12"><path d="M1 1 H6 L8 3 V11 H1 Z" fill="#fafafa" stroke="#e6e6e6" stroke-width="0.5"/><rect x="3.8" y="1.5" width="1.3" height="5" fill="#888"/></svg>
<div class="a" style="left:42.00px;top:368.58px;font-size:12px;line-height:12px;color:#262626;font-weight:normal;-webkit-text-stroke:0.2px #262626">Documentation</div>
<div class="a" style="left:255.50px;top:368.58px;font-size:12px;line-height:12px;color:#262626;font-weight:normal;-webkit-text-stroke:0.2px #262626">zip</div>
<div class="a" style="left:-55.20px;width:400px;text-align:right;top:368.58px;font-size:12px;line-height:12px;color:#262626;font-weight:normal;-webkit-text-stroke:0.2px #262626">4 KB</div>
<div class="a" style="left:358.80px;top:368.58px;font-size:12px;line-height:12px;color:#262626;font-weight:normal;-webkit-text-stroke:0.2px #262626">12.01.2024, 10:37</div>
<div class="a" style="left:485.20px;top:368.58px;font-size:12px;line-height:12px;color:#262626;font-weight:normal;-webkit-text-stroke:0.2px #262626">Zip archive</div>
<svg class="a" style="left:24.50px;top:385.01px" width="9" height="12" viewBox="0 0 9 12"><path d="M1 1 H6 L8 3 V11 H1 Z" fill="#fafafa" stroke="#e6e6e6" stroke-width="0.5"/><rect x="3.8" y="1.5" width="1.3" height="5" fill="#888"/></svg>
<div class="a" style="left:42.00px;top:385.05px;font-size:12px;line-height:12px;color:#262626;font-weight:normal;-webkit-text-stroke:0.2px #262626">Extensions</div>
<div class="a" style="left:255.50px;top:385.05px;font-size:12px;line-height:12px;color:#262626;font-weight:normal;-webkit-text-stroke:0.2px #262626">zip</div>
<div class="a" style="left:-55.20px;width:400px;text-align:right;top:385.05px;font-size:12px;line-height:12px;color:#262626;font-weight:normal;-webkit-text-stroke:0.2px #262626">4 KB</div>
<div class="a" style="left:358.80px;top:385.05px;font-size:12px;line-height:12px;color:#262626;font-weight:normal;-webkit-text-stroke:0.2px #262626">12.01.2024, 10:37</div>
<div class="a" style="left:485.20px;top:385.05px;font-size:12px;line-height:12px;color:#262626;font-weight:normal;-webkit-text-stroke:0.2px #262626">Zip archive</div>
<svg class="a" style="left:24.50px;top:401.48px" width="9" height="12" viewBox="0 0 9 12"><path d="M1 1 H6 L8 3 V11 H1 Z" fill="#fafafa" stroke="#e6e6e6" stroke-width="0.5"/><rect x="2.4" y="5" width="4.4" height="1.6" fill="#6a8ad8"/></svg>
<div class="a" style="left:42.00px;top:401.52px;font-size:12px;line-height:12px;color:#262626;font-weight:normal;-webkit-text-stroke:0.2px #262626">favicon</div>
<div class="a" style="left:255.50px;top:401.52px;font-size:12px;line-height:12px;color:#262626;font-weight:normal;-webkit-text-stroke:0.2px #262626">png</div>
<div class="a" style="left:-55.20px;width:400px;text-align:right;top:401.52px;font-size:12px;line-height:12px;color:#262626;font-weight:normal;-webkit-text-stroke:0.2px #262626">3 KB</div>
<div class="a" style="left:358.80px;top:401.52px;font-size:12px;line-height:12px;color:#262626;font-weight:normal;-webkit-text-stroke:0.2px #262626">16.01.2024, 10:32</div>
<div class="a" style="left:485.20px;top:401.52px;font-size:12px;line-height:12px;color:#262626;font-weight:normal;-webkit-text-stroke:0.2px #262626">PNG image</div>
<svg class="a" style="left:24.50px;top:417.95px" width="9" height="12" viewBox="0 0 9 12"><path d="M1 1 H6 L8 3 V11 H1 Z" fill="#fafafa" stroke="#e6e6e6" stroke-width="0.5"/><rect x="2.4" y="5" width="4.4" height="1.6" fill="#6a8ad8"/></svg>
<div class="a" style="left:42.00px;top:417.99px;font-size:12px;line-height:12px;color:#262626;font-weight:normal;-webkit-text-stroke:0.2px #262626">logo-new</div>
<div class="a" style="left:255.50px;top:417.99px;font-size:12px;line-height:12px;color:#262626;font-weight:normal;-webkit-text-stroke:0.2px #262626">png</div>
<div class="a" style="left:-55.20px;width:400px;text-align:right;top:417.99px;font-size:12px;line-height:12px;color:#262626;font-weight:normal;-webkit-text-stroke:0.2px #262626">1 KB</div>
<div class="a" style="left:358.80px;top:417.99px;font-size:12px;line-height:12px;color:#262626;font-weight:normal;-webkit-text-stroke:0.2px #262626">16.01.2024, 10:32</div>
<div class="a" style="left:485.20px;top:417.99px;font-size:12px;line-height:12px;color:#262626;font-weight:normal;-webkit-text-stroke:0.2px #262626">PNG image</div>
<svg class="a" style="left:24.50px;top:434.42px" width="9" height="12" viewBox="0 0 9 12"><path d="M1 1 H6 L8 3 V11 H1 Z" fill="#fafafa" stroke="#e6e6e6" stroke-width="0.5"/><rect x="2.4" y="5" width="4.4" height="1.6" fill="#6a8ad8"/></svg>
<div class="a" style="left:42.00px;top:434.46px;font-size:12px;line-height:12px;color:#262626;font-weight:normal;-webkit-text-stroke:0.2px #262626">mockup</div>
<div class="a" style="left:255.50px;top:434.46px;font-size:12px;line-height:12px;color:#262626;font-weight:normal;-webkit-text-stroke:0.2px #262626">jpeg</div>
<div class="a" style="left:-55.20px;width:400px;text-align:right;top:434.46px;font-size:12px;line-height:12px;color:#262626;font-weight:normal;-webkit-text-stroke:0.2px #262626">77 KB</div>
<div class="a" style="left:358.80px;top:434.46px;font-size:12px;line-height:12px;color:#262626;font-weight:normal;-webkit-text-stroke:0.2px #262626">21.01.2024, 15:22</div>
<div class="a" style="left:485.20px;top:434.46px;font-size:12px;line-height:12px;color:#262626;font-weight:normal;-webkit-text-stroke:0.2px #262626">JPE…image</div>
<svg class="a" style="left:24.50px;top:450.89px" width="9" height="12" viewBox="0 0 9 12"><path d="M1 1 H6 L8 3 V11 H1 Z" fill="#fafafa" stroke="#e6e6e6" stroke-width="0.5"/><rect x="2.4" y="5" width="4.4" height="1.6" fill="#6a8ad8"/></svg>
<div class="a" style="left:42.00px;top:450.93px;font-size:12px;line-height:12px;color:#262626;font-weight:normal;-webkit-text-stroke:0.2px #262626">new-icon</div>
<div class="a" style="left:255.50px;top:450.93px;font-size:12px;line-height:12px;color:#262626;font-weight:normal;-webkit-text-stroke:0.2px #262626">png</div>
<div class="a" style="left:-55.20px;width:400px;text-align:right;top:450.93px;font-size:12px;line-height:12px;color:#262626;font-weight:normal;-webkit-text-stroke:0.2px #262626">231 KB</div>
<div class="a" style="left:358.80px;top:450.93px;font-size:12px;line-height:12px;color:#262626;font-weight:normal;-webkit-text-stroke:0.2px #262626">21.01.2024, 15:24</div>
<div class="a" style="left:485.20px;top:450.93px;font-size:12px;line-height:12px;color:#262626;font-weight:normal;-webkit-text-stroke:0.2px #262626">PNG image</div>
<svg class="a" style="left:24.50px;top:467.36px" width="9" height="12" viewBox="0 0 9 12"><path d="M1 1 H6 L8 3 V11 H1 Z" fill="#fafafa" stroke="#e6e6e6" stroke-width="0.5"/><rect x="3.8" y="1.5" width="1.3" height="5" fill="#888"/></svg>
<div class="a" style="left:42.00px;top:467.40px;font-size:12px;line-height:12px;color:#262626;font-weight:normal;-webkit-text-stroke:0.2px #262626">Reports</div>
<div class="a" style="left:255.50px;top:467.40px;font-size:12px;line-height:12px;color:#262626;font-weight:normal;-webkit-text-stroke:0.2px #262626">zip</div>
<div class="a" style="left:-55.20px;width:400px;text-align:right;top:467.40px;font-size:12px;line-height:12px;color:#262626;font-weight:normal;-webkit-text-stroke:0.2px #262626">4 KB</div>
<div class="a" style="left:358.80px;top:467.40px;font-size:12px;line-height:12px;color:#262626;font-weight:normal;-webkit-text-stroke:0.2px #262626">12.01.2024, 10:37</div>
<div class="a" style="left:485.20px;top:467.40px;font-size:12px;line-height:12px;color:#262626;font-weight:normal;-webkit-text-stroke:0.2px #262626">Zip archive</div>
<svg class="a" style="left:24.50px;top:483.83px" width="9" height="12" viewBox="0 0 9 12"><path d="M1 1 H6 L8 3 V11 H1 Z" fill="#fafafa" stroke="#e6e6e6" stroke-width="0.5"/><rect x="2.4" y="5" width="4.4" height="1.6" fill="#6a8ad8"/></svg>
<div class="a" style="left:42.00px;top:483.87px;font-size:12px;line-height:12px;color:#262626;font-weight:normal;-webkit-text-stroke:0.2px #262626">return-ticket</div>
<div class="a" style="left:255.50px;top:483.87px;font-size:12px;line-height:12px;color:#262626;font-weight:normal;-webkit-text-stroke:0.2px #262626">pdf</div>
<div class="a" style="left:-55.20px;width:400px;text-align:right;top:483.87px;font-size:12px;line-height:12px;color:#262626;font-weight:normal;-webkit-text-stroke:0.2px #262626">308 KB</div>
<div class="a" style="left:358.80px;top:483.87px;font-size:12px;line-height:12px;color:#262626;font-weight:normal;-webkit-text-stroke:0.2px #262626">04.12.2023, 10:19</div>
<div class="a" style="left:485.20px;top:483.87px;font-size:12px;line-height:12px;color:#262626;font-weight:normal;-webkit-text-stroke:0.2px #262626">PDF…ment</div>
<svg class="a" style="left:24.50px;top:500.30px" width="9" height="12" viewBox="0 0 9 12"><path d="M1 1 H6 L8 3 V11 H1 Z" fill="#fafafa" stroke="#e6e6e6" stroke-width="0.5"/><rect x="2.4" y="5" width="4.4" height="1.6" fill="#6a8ad8"/></svg>
<div class="a" style="left:42.00px;top:500.34px;font-size:12px;line-height:12px;color:#262626;font-weight:normal;-webkit-text-stroke:0.2px #262626">Screenshot 202…12-15 at 13.32.39</div>
<div class="a" style="left:255.50px;top:500.34px;font-size:12px;line-height:12px;color:#262626;font-weight:normal;-webkit-text-stroke:0.2px #262626">png</div>
<div class="a" style="left:-55.20px;width:400px;text-align:right;top:500.34px;font-size:12px;line-height:12px;color:#262626;font-weight:normal;-webkit-text-stroke:0.2px #262626">4 KB</div>
<div class="a" style="left:358.80px;top:500.34px;font-size:12px;line-height:12px;color:#262626;font-weight:normal;-webkit-text-stroke:0.2px #262626">15.12.2023, 13:32</div>
<div class="a" style="left:485.20px;top:500.34px;font-size:12px;line-height:12px;color:#262626;font-weight:normal;-webkit-text-stroke:0.2px #262626">PNG image</div>
<svg class="a" style="left:24.50px;top:516.77px" width="9" height="12" viewBox="0 0 9 12"><path d="M1 1 H6 L8 3 V11 H1 Z" fill="#fafafa" stroke="#e6e6e6" stroke-width="0.5"/><rect x="2.4" y="5" width="4.4" height="1.6" fill="#6a8ad8"/></svg>
<div class="a" style="left:42.00px;top:516.81px;font-size:12px;line-height:12px;color:#262626;font-weight:normal;-webkit-text-stroke:0.2px #262626">Screenshot 2023-12-19 at 11.20.30</div>
<div class="a" style="left:255.50px;top:516.81px;font-size:12px;line-height:12px;color:#262626;font-weight:normal;-webkit-text-stroke:0.2px #262626">png</div>
<div class="a" style="left:-55.20px;width:400px;text-align:right;top:516.81px;font-size:12px;line-height:12px;color:#262626;font-weight:normal;-webkit-text-stroke:0.2px #262626">43 KB</div>
<div class="a" style="left:358.80px;top:516.81px;font-size:12px;line-height:12px;color:#262626;font-weight:normal;-webkit-text-stroke:0.2px #262626">19.12.2023, 11:20</div>
<div class="a" style="left:485.20px;top:516.81px;font-size:12px;line-height:12px;color:#262626;font-weight:normal;-webkit-text-stroke:0.2px #262626">PNG image</div>
<div class="a" style="left:575.20px;top:167.00px;width:7.50px;height:307.00px;background:#c4c4c4;border-radius:4px"></div>
<div class="a" style="left:-7.50px;width:600px;text-align:center;top:537.11px;font-size:11.45px;line-height:11.45px;color:#4a4a4a;font-weight:normal;-webkit-text-stroke:0.2px #4a4a4a">0 bytes / 6,9 MB in 0 / 15 file(s). 0 / 10 dir(s)</div>
<div class="a" style="left:591.90px;top:147.50px;width:50.40px;height:13.00px;background:#d8d8d8;border-radius:4px"></div>
<div class="a" style="left:598.00px;top:148.11px;font-size:10.5px;line-height:10.5px;color:#fff;font-weight:bold;">name</div>
<svg class="a" style="left:631.00px;top:151.50px" width="6" height="5" viewBox="0 0 6 5"><path d="M0.3 4.6 L3 0.4 L5.7 4.6 Z" fill="#3a3a3a"/></svg>
<div class="a" style="left:656.00px;top:148.11px;font-size:10.5px;line-height:10.5px;color:#8c8c8c;font-weight:bold;">extension</div>
<div class="a" style="left:729.50px;top:148.11px;font-size:10.5px;line-height:10.5px;color:#8c8c8c;font-weight:bold;">size</div>
<div class="a" style="left:775.00px;top:148.11px;font-size:10.5px;line-height:10.5px;color:#8c8c8c;font-weight:bold;">modified</div>
<div class="a" style="left:843.80px;top:148.11px;font-size:10.5px;line-height:10.5px;color:#8c8c8c;font-weight:bold;">created</div>
<div class="a" style="left:906.50px;top:148.11px;font-size:10.5px;line-height:10.5px;color:#8c8c8c;font-weight:bold;">added</div>
<div class="a" style="left:963.50px;top:148.11px;font-size:10.5px;line-height:10.5px;color:#8c8c8c;font-weight:bold;">opened</div>
<div class="a" style="left:1025.60px;top:148.11px;font-size:10.5px;line-height:10.5px;color:#8c8c8c;font-weight:bold;">kind</div>
<svg class="a" style="left:616.50px;top:183.50px" width="62" height="54" viewBox="0 0 62 54"><path d="M1 6 Q1 1.5 5.5 1.5 H18 Q21.5 1.5 24 4 L26 6 Q27.5 7.5 30 7.5 H57 Q61 7.5 61 11.5 V48.5 Q61 52.5 57 52.5 H5 Q1 52.5 1 48.5 Z" fill="#3799dd"/><rect x="1" y="10" width="60" height="42.5" rx="4" fill="#72c8f8"/><path d="M1 46 H61 V48.5 Q61 52.5 57 52.5 H5 Q1 52.5 1 48.5 Z" fill="#5cb6ee"/></svg>
<div class="a" style="left:347.20px;width:600px;text-align:center;top:252.44px;font-size:12px;line-height:12px;color:#262626;font-weight:normal;">..</div>
<div class="a" style="left:766.70px;top:188.90px;width:59.90px;height:42.60px;background:#fff;box-shadow:0 1px 2px rgba(0,0,0,0.28)"></div>
<svg class="a" style="left:769.00px;top:191.20px" width="55.30" height="38.00" viewBox="0 0 100 100" preserveAspectRatio="none"><defs><linearGradient id="p1s" x1="0" y1="0" x2="0" y2="1"><stop offset="0" stop-color="#5b9ddb"/><stop offset="0.7" stop-color="#b0c8da"/></linearGradient></defs><rect width="100" height="100" fill="url(#p1s)"/><path d="M0 55 Q20 52 40 58 L70 62 L100 66 V100 H0 Z" fill="#a8a498"/><rect y="78" width="100" height="22" fill="#6f8aa6"/><path d="M62 70 L100 70 V100 H70 Z" fill="#8a6a3a"/><rect x="64" y="32" width="6" height="68" fill="#a8402e"/><rect x="57" y="50" width="3" height="30" fill="#b09080" opacity="0.6"/></svg>
<div class="a" style="left:916.00px;top:189.30px;width:60.60px;height:41.90px;background:#fff;box-shadow:0 1px 2px rgba(0,0,0,0.28)"></div>
<svg class="a" style="left:918.30px;top:191.60px" width="56.00" height="37.30" viewBox="0 0 100 100" preserveAspectRatio="none"><defs><filter id="p2b" x="-50%" y="-50%" width="200%" height="200%"><feGaussianBlur stdDeviation="3"/></filter></defs><rect width="100" height="100" fill="#1c1030"/><g filter="url(#p2b)"><ellipse cx="24" cy="20" rx="13" ry="13" fill="#e0c0ff"/><ellipse cx="75" cy="24" rx="10" ry="11" fill="#e0b8ff"/><ellipse cx="40" cy="52" rx="9" ry="8" fill="#a090f0"/><ellipse cx="20" cy="76" rx="6" ry="5" fill="#d090f0"/><path d="M0 40 L25 25 L28 30 L5 55 Z" fill="#8a9ac0" opacity="0.7"/><path d="M58 100 L66 82 L84 76 L96 86 L100 100 Z" fill="#c08848"/><path d="M78 40 Q90 32 98 38 L100 100 L85 100 Z" fill="#306060" opacity="0.8"/></g><rect x="37" y="58" width="3" height="42" fill="#2a2a48"/></svg>
<div class="a" style="left:1065.50px;top:192.60px;width:59.70px;height:36.30px;background:#fff;box-shadow:0 1px 2px rgba(0,0,0,0.28)"></div>
<svg class="a" style="left:1067.80px;top:194.90px" width="55.10" height="31.70" viewBox="0 0 100 100" preserveAspectRatio="none"><defs><linearGradient id="p3s" x1="0" y1="0" x2="0" y2="1"><stop offset="0" stop-color="#e88a1c"/><stop offset="0.7" stop-color="#f0a82a"/></linearGradient><linearGradient id="p3m" x1="0" y1="0" x2="0" y2="1"><stop offset="0" stop-color="#9a5a30"/><stop offset="0.55" stop-color="#6a3a20"/><stop offset="1" stop-color="#1a0e08"/></linearGradient></defs><rect width="100" height="100" fill="url(#p3s)"/><path d="M0 72 L20 65 L38 32 L55 34 L62 40 L78 44 L92 60 L100 62 V100 H0 Z" fill="url(#p3m)"/></svg>
<div class="a" style="left:617.10px;top:306.70px;width:61.10px;height:41.30px;background:#fff;box-shadow:0 1px 2px rgba(0,0,0,0.28)"></div>
<svg class="a" style="left:619.40px;top:309.00px" width="56.50" height="36.70" viewBox="0 0 100 100" preserveAspectRatio="none"><rect width="100" height="100" fill="#a6bcbc"/><path d="M0 90 L42 18 L58 18 L100 90 V100 H0 Z" fill="#5e686c"/><rect x="48" y="18" width="4" height="82" fill="#7a8a90"/><rect x="20" y="72" width="60" height="8" fill="#2a3034"/><rect x="30" y="80" width="8" height="20" fill="#1e2226"/><rect x="60" y="80" width="8" height="20" fill="#1e2226"/></svg>
<div class="a" style="left:776.30px;top:297.60px;width:40.40px;height:59.60px;background:#fff;box-shadow:0 1px 2px rgba(0,0,0,0.28)"></div>
<svg class="a" style="left:778.60px;top:299.90px" width="35.80" height="55.00" viewBox="0 0 100 100" preserveAspectRatio="none"><defs><linearGradient id="p5s" x1="0" y1="0" x2="0" y2="1"><stop offset="0" stop-color="#d8d0d6"/><stop offset="0.4" stop-color="#e2d2cc"/><stop offset="0.55" stop-color="#e0b090"/></linearGradient><linearGradient id="p5g" x1="0" y1="0" x2="0" y2="1"><stop offset="0" stop-color="#8a6a50"/><stop offset="1" stop-color="#4a3a30"/></linearGradient></defs><rect width="100" height="56" fill="url(#p5s)"/><rect y="55" width="100" height="45" fill="url(#p5g)"/><path d="M46 56 L54 56 L90 100 L10 100 Z" fill="#54463e"/><rect x="49" y="82" width="2.5" height="7" fill="#e8e0d8"/></svg>
<div class="a" style="left:925.00px;top:298.00px;width:41.90px;height:59.00px;background:#fff;box-shadow:0 1px 2px rgba(0,0,0,0.28)"></div>
<svg class="a" style="left:927.30px;top:300.30px" width="37.30" height="54.40" viewBox="0 0 100 100" preserveAspectRatio="none"><defs><linearGradient id="p6s" x1="0" y1="0" x2="0" y2="1"><stop offset="0" stop-color="#d8a888"/><stop offset="0.35" stop-color="#e89868"/></linearGradient></defs><rect width="100" height="40" fill="url(#p6s)"/><rect y="38" width="100" height="62" fill="#343a3a"/><rect x="22" y="22" width="10" height="50" fill="#4a4038"/><rect x="88" y="28" width="8" height="20" fill="#3a3430"/><path d="M0 68 L45 68 L60 100 H0 Z" fill="#6a7272"/><path d="M40 60 L55 60 L90 100 L70 100 Z" fill="#24302e"/></svg>
<div class="a" style="left:1074.40px;top:298.00px;width:42.00px;height:59.00px;background:#fff;box-shadow:0 1px 2px rgba(0,0,0,0.28)"></div>
<svg class="a" style="left:1076.70px;top:300.30px" width="37.40" height="54.40" viewBox="0 0 100 100" preserveAspectRatio="none"><defs><linearGradient id="p7s" x1="0" y1="0" x2="0" y2="1"><stop offset="0" stop-color="#bcc6d0"/><stop offset="1" stop-color="#d8d8d8"/></linearGradient></defs><rect width="100" height="50" fill="url(#p7s)"/><rect y="45" width="100" height="20" fill="#b08838"/><rect y="60" width="100" height="40" fill="#6a5040"/><path d="M42 52 L58 52 L100 100 L0 100 Z" fill="#8a7a6c"/><rect x="47" y="52" width="6" height="28" fill="#e0e4ec"/></svg>
<div class="a" style="left:625.70px;top:414.80px;width:43.30px;height:59.20px;background:#fff;box-shadow:0 1px 2px rgba(0,0,0,0.28)"></div>
<svg class="a" style="left:628.00px;top:417.10px" width="38.70" height="54.60" viewBox="0 0 100 100" preserveAspectRatio="none"><rect width="100" height="100" fill="#b8aa98"/><path d="M0 0 H100 V35 L60 42 L0 28 Z" fill="#c8c0b4"/><rect y="42" width="100" height="30" fill="#9a8a78"/><rect x="20" y="42" width="18" height="30" fill="#3a3028"/><rect x="62" y="48" width="28" height="16" fill="#e0dcd8"/><rect y="66" width="70" height="20" fill="#241c18"/><path d="M0 80 L70 80 L50 100 H0 Z" fill="#c8ccd0"/><path d="M60 100 L80 72 L100 72 V100 Z" fill="#7a5a3e"/></svg>
<div class="a" style="left:766.60px;top:425.70px;width:60.20px;height:38.30px;background:#fff;box-shadow:0 1px 2px rgba(0,0,0,0.28)"></div>
<svg class="a" style="left:768.90px;top:428.00px" width="55.60" height="33.70" viewBox="0 0 100 100" preserveAspectRatio="none"><defs><linearGradient id="p9s" x1="0" y1="0" x2="0" y2="1"><stop offset="0" stop-color="#0c3e5c"/><stop offset="0.5" stop-color="#1a5a78"/><stop offset="0.68" stop-color="#4a7c98"/><stop offset="0.76" stop-color="#d8e4f0"/><stop offset="0.8" stop-color="#8a8aa0"/></linearGradient></defs><rect width="100" height="82" fill="url(#p9s)"/><rect y="80" width="100" height="20" fill="#2a2838"/><path d="M32 90 L38 78 L58 76 L66 84 L68 92 Z" fill="#2a2848"/><circle cx="88" cy="76" r="2" fill="#60d090"/></svg>
<div class="a" style="left:916.20px;top:423.50px;width:60.50px;height:42.30px;background:#fff;box-shadow:0 1px 2px rgba(0,0,0,0.28)"></div>
<svg class="a" style="left:918.50px;top:425.80px" width="55.90" height="37.70" viewBox="0 0 100 100" preserveAspectRatio="none"><defs><linearGradient id="p10s" x1="0" y1="0" x2="0" y2="1"><stop offset="0" stop-color="#ece0cc"/><stop offset="0.5" stop-color="#e8c8b0"/></linearGradient><linearGradient id="p10g" x1="0" y1="0" x2="0" y2="1"><stop offset="0" stop-color="#d89868"/><stop offset="1" stop-color="#a86a50"/></linearGradient></defs><rect width="100" height="100" fill="url(#p10s)"/><path d="M0 58 L12 40 L30 38 L38 50 L60 55 L100 52 V100 H0 Z" fill="#d8906a"/><rect y="68" width="100" height="32" fill="url(#p10g)"/><path d="M60 100 L100 80 V100 Z" fill="#8a5040"/></svg>
<div class="a" style="left:1065.30px;top:422.00px;width:60.60px;height:45.60px;background:#fff;box-shadow:0 1px 2px rgba(0,0,0,0.28)"></div>
<svg class="a" style="left:1067.60px;top:424.30px" width="56.00" height="41.00" viewBox="0 0 100 100" preserveAspectRatio="none"><rect width="100" height="100" fill="#d8d4dc"/><path d="M0 45 L8 45 L10 22 L18 22 L20 45 L28 45 L30 15 L36 15 L38 45 L48 30 L60 30 L62 45 L68 12 L72 12 L74 45 L86 38 L90 25 L96 38 L100 38 V60 H0 Z" fill="#505468"/><rect y="58" width="100" height="16" fill="#9a9aa2"/><rect x="45" y="58" width="55" height="16" fill="#8a6a50"/><rect y="72" width="100" height="9" fill="#e8e8f0"/><rect y="80" width="100" height="20" fill="#b09a80"/><rect x="54" y="52" width="6" height="22" fill="#6a3a30"/></svg>
<div class="a" style="left:496.50px;width:600px;text-align:center;top:251.68px;font-size:12.9px;line-height:12.9px;color:#2e2e2e;font-weight:normal;-webkit-text-stroke:0.2px #2e2e2e">photo-001.jpeg</div>
<div class="a" style="left:645.80px;width:600px;text-align:center;top:251.68px;font-size:12.9px;line-height:12.9px;color:#2e2e2e;font-weight:normal;-webkit-text-stroke:0.2px #2e2e2e">photo-002.jpeg</div>
<div class="a" style="left:795.20px;width:600px;text-align:center;top:251.68px;font-size:12.9px;line-height:12.9px;color:#2e2e2e;font-weight:normal;-webkit-text-stroke:0.2px #2e2e2e">photo-003.jpeg</div>
<div class="a" style="left:347.20px;width:600px;text-align:center;top:368.88px;font-size:12.9px;line-height:12.9px;color:#2e2e2e;font-weight:normal;-webkit-text-stroke:0.2px #2e2e2e">photo-004.jpeg</div>
<div class="a" style="left:496.50px;width:600px;text-align:center;top:368.88px;font-size:12.9px;line-height:12.9px;color:#2e2e2e;font-weight:normal;-webkit-text-stroke:0.2px #2e2e2e">photo-005.jpeg</div>
<div class="a" style="left:645.80px;width:600px;text-align:center;top:368.88px;font-size:12.9px;line-height:12.9px;color:#2e2e2e;font-weight:normal;-webkit-text-stroke:0.2px #2e2e2e">photo-006.jpeg</div>
<div class="a" style="left:795.20px;width:600px;text-align:center;top:368.88px;font-size:12.9px;line-height:12.9px;color:#2e2e2e;font-weight:normal;-webkit-text-stroke:0.2px #2e2e2e">photo-007.jpeg</div>
<div class="a" style="left:347.20px;width:600px;text-align:center;top:486.08px;font-size:12.9px;line-height:12.9px;color:#2e2e2e;font-weight:normal;-webkit-text-stroke:0.2px #2e2e2e">photo-008.jpeg</div>
<div class="a" style="left:496.50px;width:600px;text-align:center;top:486.08px;font-size:12.9px;line-height:12.9px;color:#2e2e2e;font-weight:normal;-webkit-text-stroke:0.2px #2e2e2e">photo-009.jpeg</div>
<div class="a" style="left:645.80px;width:600px;text-align:center;top:486.08px;font-size:12.9px;line-height:12.9px;color:#2e2e2e;font-weight:normal;-webkit-text-stroke:0.2px #2e2e2e">photo-010.jpeg</div>
<div class="a" style="left:795.20px;width:600px;text-align:center;top:486.08px;font-size:12.9px;line-height:12.9px;color:#2e2e2e;font-weight:normal;-webkit-text-stroke:0.2px #2e2e2e">photo-011.jpeg</div>
<div class="a" style="left:1156.80px;top:164.00px;width:15.00px;height:368.00px;background:#fafafa"></div>
<div class="a" style="left:1156.80px;top:164.00px;width:1.00px;height:368.00px;background:#eeeeee"></div>
<div class="a" style="left:1161.20px;top:166.00px;width:7.50px;height:227.00px;background:#c4c4c4;border-radius:4px"></div>
<div class="a" style="left:597.00px;top:536.69px;font-size:11px;line-height:11px;color:#4a4a4a;font-weight:normal;-webkit-text-stroke:0.2px #4a4a4a">..</div>
<div class="a" style="left:1029.00px;top:537.49px;font-size:11px;line-height:11px;color:#4a4a4a;font-weight:normal;-webkit-text-stroke:0.2px #4a4a4a">DIR</div>
<div class="a" style="left:761.40px;width:400px;text-align:right;top:537.49px;font-size:11px;line-height:11px;color:#4a4a4a;font-weight:normal;-webkit-text-stroke:0.2px #4a4a4a">04.12.2023, 12:17:04</div>
<div class="a" style="left:0.00px;top:551.00px;width:1172.00px;height:29.50px;background:#f1f1f1"></div>
<div class="a" style="left:0.00px;top:580.50px;width:1172.00px;height:1.00px;background:#cdcdcd"></div>
<div class="a" style="left:-9.50px;width:400px;text-align:right;top:560.83px;font-size:13.2px;line-height:13.2px;color:#383838;font-weight:normal;-webkit-text-stroke:0.2px #383838">/Users/Nadine/Desktop/Work files</div>
<div class="a" style="left:401.40px;top:557.00px;width:758.00px;height:20.00px;background:#fff;border-radius:5px;box-shadow:0 0.5px 1px rgba(0,0,0,0.12)"></div>
<svg class="a" style="left:1143.00px;top:559.00px" width="16" height="16" viewBox="0 0 16 16"><rect x="0" y="0" width="16" height="16" rx="4" fill="#1a7ff8"/><path d="M4.6 6.6 L8 9.8 L11.4 6.6" fill="none" stroke="#fff" stroke-width="1.6" stroke-linecap="round" stroke-linejoin="round"/></svg>
<div class="a" style="left:0.00px;top:581.00px;width:1172.00px;height:28.00px;background:linear-gradient(#f8f8f8,#efefef)"></div>
<div class="a" style="left:0.00px;top:580.00px;width:1172.00px;height:1.00px;background:#cbcbcb"></div>
<div class="a" style="left:-202.42px;width:600px;text-align:center;top:589.20px;font-size:13px;line-height:13px;color:#3a3a3a;font-weight:normal;-webkit-text-stroke:0.2px #3a3a3a">View - F3</div>
<div class="a" style="left:195.17px;top:581.00px;width:1.00px;height:28.00px;background:#cfcfcf"></div>
<div class="a" style="left:-7.25px;width:600px;text-align:center;top:589.20px;font-size:13px;line-height:13px;color:#3a3a3a;font-weight:normal;-webkit-text-stroke:0.2px #3a3a3a">Edit - F4</div>
<div class="a" style="left:390.33px;top:581.00px;width:1.00px;height:28.00px;background:#cfcfcf"></div>
<div class="a" style="left:187.92px;width:600px;text-align:center;top:589.20px;font-size:13px;line-height:13px;color:#3a3a3a;font-weight:normal;-webkit-text-stroke:0.2px #3a3a3a">Copy - F5</div>
<div class="a" style="left:585.50px;top:581.00px;width:1.00px;height:28.00px;background:#cfcfcf"></div>
<div class="a" style="left:383.08px;width:600px;text-align:center;top:589.20px;font-size:13px;line-height:13px;color:#3a3a3a;font-weight:normal;-webkit-text-stroke:0.2px #3a3a3a">Move - F6</div>
<div class="a" style="left:780.67px;top:581.00px;width:1.00px;height:28.00px;background:#cfcfcf"></div>
<div class="a" style="left:578.25px;width:600px;text-align:center;top:589.20px;font-size:13px;line-height:13px;color:#3a3a3a;font-weight:normal;-webkit-text-stroke:0.2px #3a3a3a">New Folder - F7</div>
<div class="a" style="left:975.83px;top:581.00px;width:1.00px;height:28.00px;background:#cfcfcf"></div>
<div class="a" style="left:773.42px;width:600px;text-align:center;top:589.20px;font-size:13px;line-height:13px;color:#3a3a3a;font-weight:normal;-webkit-text-stroke:0.2px #3a3a3a">Delete - F8</div>
</div></div>
</body></html>
